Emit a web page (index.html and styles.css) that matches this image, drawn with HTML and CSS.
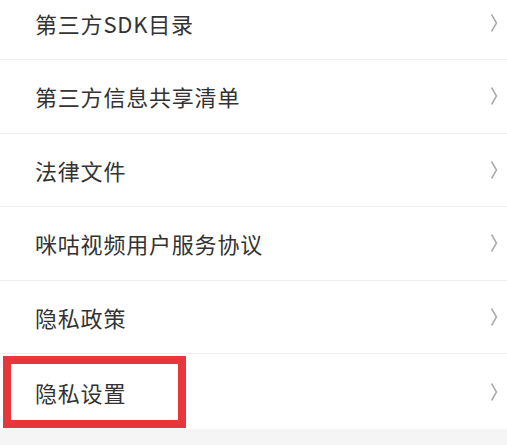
FILE: index.html
```html
<!DOCTYPE html>
<html lang="zh-CN">
<head>
    <meta charset="UTF-8">
    <meta name="viewport" content="width=device-width, initial-scale=1.0">
    <title>关于</title>
    <link rel="stylesheet" href="styles.css">
</head>
<body>
    <ul class="menu-list">
        <li class="menu-item">
            <span class="menu-label">第三方SDK目录</span>
            <svg class="menu-arrow" viewBox="0 0 8 20"><polyline points="1.5,1.5 6.5,10 1.5,18.5"/></svg>
        </li>
        <li class="menu-item">
            <span class="menu-label">第三方信息共享清单</span>
            <svg class="menu-arrow" viewBox="0 0 8 20"><polyline points="1.5,1.5 6.5,10 1.5,18.5"/></svg>
        </li>
        <li class="menu-item">
            <span class="menu-label">法律文件</span>
            <svg class="menu-arrow" viewBox="0 0 8 20"><polyline points="1.5,1.5 6.5,10 1.5,18.5"/></svg>
        </li>
        <li class="menu-item">
            <span class="menu-label">咪咕视频用户服务协议</span>
            <svg class="menu-arrow" viewBox="0 0 8 20"><polyline points="1.5,1.5 6.5,10 1.5,18.5"/></svg>
        </li>
        <li class="menu-item">
            <span class="menu-label">隐私政策</span>
            <svg class="menu-arrow" viewBox="0 0 8 20"><polyline points="1.5,1.5 6.5,10 1.5,18.5"/></svg>
        </li>
        <li class="menu-item menu-item-last">
            <span class="menu-label">隐私设置</span>
            <svg class="menu-arrow" viewBox="0 0 8 20"><polyline points="1.5,1.5 6.5,10 1.5,18.5"/></svg>
            <div class="highlight-box"></div>
        </li>
    </ul>
</body>
</html>
```

FILE: styles.css
```css
* {
    margin: 0;
    padding: 0;
    box-sizing: border-box;
}

body {
    font-family: "Noto Sans CJK SC", "Noto Sans", sans-serif;
    background-color: #f5f5f5;
    min-height: 100vh;
    overflow: hidden;
}

.menu-list {
    list-style: none;
    background-color: white;
    margin-top: -13.5px;
}

.menu-item {
    position: relative;
    display: flex;
    align-items: center;
    justify-content: space-between;
    height: 73.5px;
    padding: 0 9px 0 35px;
    border-bottom: 1px solid #eeeeee;
}

.menu-item-last {
    height: 75px;
    border-bottom: none;
}

.menu-label {
    font-size: 22px;
    letter-spacing: 0.8px;
    color: #333333;
}

.menu-arrow {
    width: 8px;
    height: 20px;
    fill: none;
    stroke: #aaaaaa;
    stroke-width: 1.5;
}

.highlight-box {
    position: absolute;
    left: 3px;
    top: 2px;
    width: 183px;
    height: 72px;
    border: 8px solid #e8373c;
}
```
